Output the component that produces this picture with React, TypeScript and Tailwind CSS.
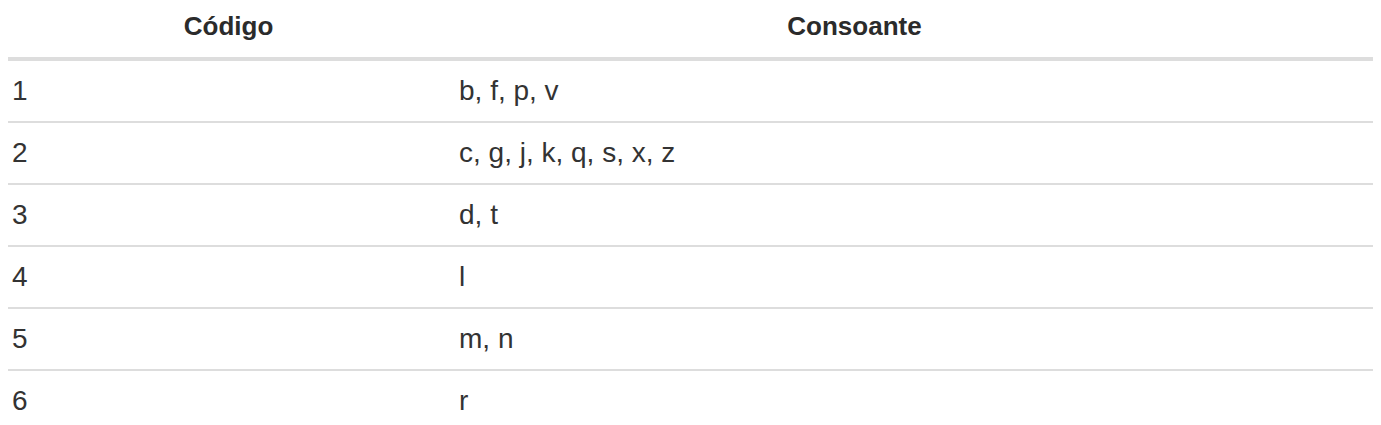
const rows: [string, string][] = [
  ["1", "b, f, p, v"],
  ["2", "c, g, j, k, q, s, x, z"],
  ["3", "d, t"],
  ["4", "l"],
  ["5", "m, n"],
  ["6", "r"],
];

export default function App() {
  return (
    <div className="min-h-screen bg-white px-2 text-[#333] font-['Liberation_Sans',Arial,sans-serif]">
      <div className="grid grid-cols-[441px_811px_113px] h-[61px] items-center border-b-4 border-[#dddddd] text-[26px] font-bold text-[#2b2b2b]">
        <div className="text-center pb-[5px]">Código</div>
        <div className="text-center pb-[5px]">Consoante</div>
        <div />
      </div>
      {rows.map(([code, cons], i) => (
        <div
          key={code}
          className={
            i < rows.length - 1
              ? "grid grid-cols-[441px_924px] h-[62px] items-center border-b-2 border-[#dddddd] text-[28px]"
              : "grid grid-cols-[441px_924px] h-[60px] items-center text-[28px]"
          }
        >
          <div className="pl-[4px]">{code}</div>
          <div className="pl-[10px]">{cons}</div>
        </div>
      ))}
    </div>
  );
}
